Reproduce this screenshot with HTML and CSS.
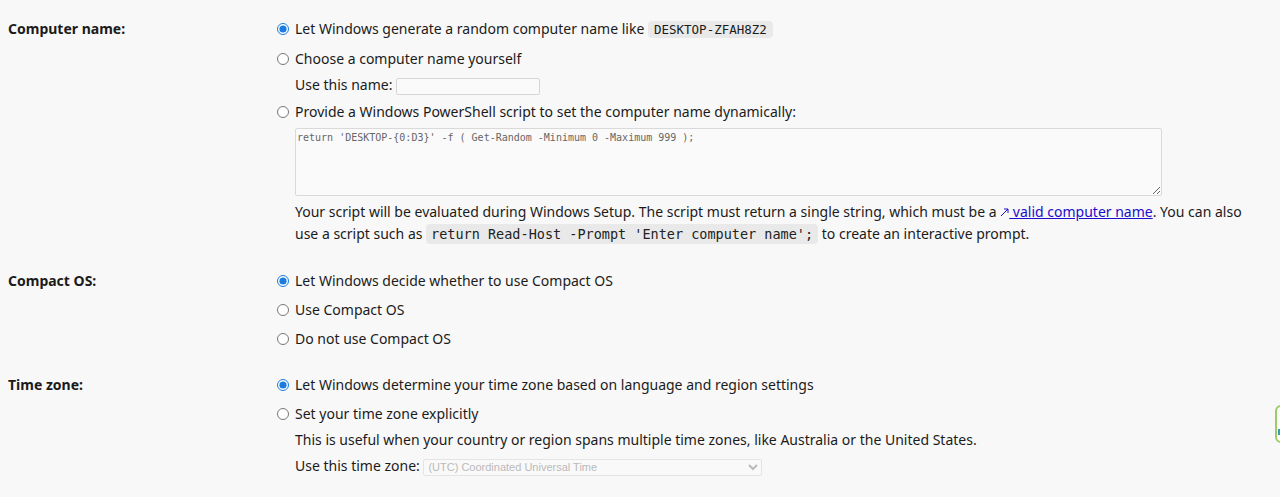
FILE: index.html
```html
<!DOCTYPE html>
<html lang="en">
<head>
    <meta charset="UTF-8">
    <meta name="viewport" content="width=device-width, initial-scale=1.0">
    <title>Unattend settings</title>
    <link rel="stylesheet" href="styles.css">
</head>
<body>
    <div class="settings">
        <section class="row">
            <div class="row-label">Computer name:</div>
            <div class="choices">
                <label class="option">
                    <input type="radio" name="computername" checked>
                    <span>Let Windows generate a random computer name like <code class="chip">DESKTOP-ZFAH8Z2</code></span>
                </label>
                <label class="option">
                    <input type="radio" name="computername">
                    <span>Choose a computer name yourself</span>
                </label>
                <div class="sub">
                    Use this name: <input type="text" class="name-input">
                </div>
                <label class="option">
                    <input type="radio" name="computername">
                    <span>Provide a Windows PowerShell script to set the computer name dynamically:</span>
                </label>
                <div class="sub">
                    <textarea class="script-box" spellcheck="false">return 'DESKTOP-{0:D3}' -f ( Get-Random -Minimum 0 -Maximum 999 );</textarea>
                    <p class="note">Your script will be evaluated during Windows Setup. The script must return a single string, which must be a <a href="#" class="ext-link"><svg class="ext-icon" width="9" height="9" viewBox="0 0 9 9"><path d="M1 8 L8 1 M4 1 H8 V5" fill="none" stroke="currentColor" stroke-width="1"/></svg> valid computer name</a>. You can also use a script such as <code class="chip chip-wide">return Read-Host -Prompt 'Enter computer name';</code> to create an interactive prompt.</p>
                </div>
            </div>
        </section>

        <section class="row">
            <div class="row-label">Compact OS:</div>
            <div class="choices">
                <label class="option">
                    <input type="radio" name="compact" checked>
                    <span>Let Windows decide whether to use Compact OS</span>
                </label>
                <label class="option">
                    <input type="radio" name="compact">
                    <span>Use Compact OS</span>
                </label>
                <label class="option">
                    <input type="radio" name="compact">
                    <span>Do not use Compact OS</span>
                </label>
            </div>
        </section>

        <section class="row">
            <div class="row-label">Time zone:</div>
            <div class="choices">
                <label class="option">
                    <input type="radio" name="timezone" checked>
                    <span>Let Windows determine your time zone based on language and region settings</span>
                </label>
                <label class="option">
                    <input type="radio" name="timezone">
                    <span>Set your time zone explicitly</span>
                </label>
                <div class="sub">This is useful when your country or region spans multiple time zones, like Australia or the United States.</div>
                <div class="sub">
                    Use this time zone: <select class="tz-select" disabled>
                        <option>(UTC) Coordinated Universal Time</option>
                    </select>
                </div>
            </div>
        </section>
    </div>

    <div class="side-tab"><span></span></div>
</body>
</html>
```

FILE: styles.css
```css
body {
    font-family: "Noto Sans", sans-serif;
    font-size: 14px;
    color: #1b1b1b;
    background-color: #f8f8f8;
    margin: 0;
    padding: 18px 8px;
}
.row {
    display: grid;
    grid-template-columns: 269px 1fr;
    margin-bottom: 25px;
}
.row-label {
    font-weight: bold;
    line-height: 21px;
}
.choices {
    display: flex;
    flex-direction: column;
}
.option {
    display: flex;
    align-items: center;
    line-height: 21px;
    margin-top: 8px;
}
.option:first-child {
    margin-top: 0;
}
.option input[type="radio"] {
    width: 12px;
    height: 12px;
    margin: 0 6px 0 0;
    accent-color: #1a7be0;
}
.sub {
    margin-left: 18px;
    margin-top: 5px;
    line-height: 21px;
}
.sub + .option {
    margin-top: 6px;
}
.chip {
    font-family: "DejaVu Sans Mono", monospace;
    font-size: 12.5px;
    background: #e9e9e9;
    padding: 1px 6px;
    border-radius: 4px;
}
.chip-wide {
    font-size: 13.5px;
    color: #222;
    padding: 2px 5px;
}
.name-input {
    width: 142px;
    height: 15px;
    padding: 0;
    border: 1px solid #d6d6d6;
    border-radius: 2px;
    background: #fafafa;
    vertical-align: middle;
}
.script-box {
    display: block;
    width: 867px;
    height: 68px;
    box-sizing: border-box;
    margin-top: 1px;
    padding: 3px 1px;
    font-family: "DejaVu Sans Mono", monospace;
    font-size: 10px;
    color: #666;
    background: #fafafa;
    border: 1px solid #d9d9d9;
    border-radius: 2px;
}
.note {
    margin: 5px 0 0;
    line-height: 22px;
    padding-right: 14px;
}
.ext-link {
    color: #1a0dcc;
}
.ext-icon {
    vertical-align: 0;
}
.tz-select {
    width: 339px;
    height: 17px;
    padding: 0;
    font-family: "Liberation Sans", Arial, sans-serif;
    font-size: 11px;
    color: #a0a0a0;
    background: #fafafa;
    border: 1px solid #dcdcdc;
    border-radius: 2px;
    vertical-align: middle;
}
.side-tab {
    position: fixed;
    left: 1275px;
    top: 405px;
    width: 40px;
    height: 34px;
    border: 2px solid #9ccc65;
    border-radius: 6px;
    background: #fbfbfb;
}
.side-tab span {
    position: absolute;
    left: 1px;
    top: 22px;
    width: 3px;
    height: 6px;
    background: #3a9ab0;
}
```
